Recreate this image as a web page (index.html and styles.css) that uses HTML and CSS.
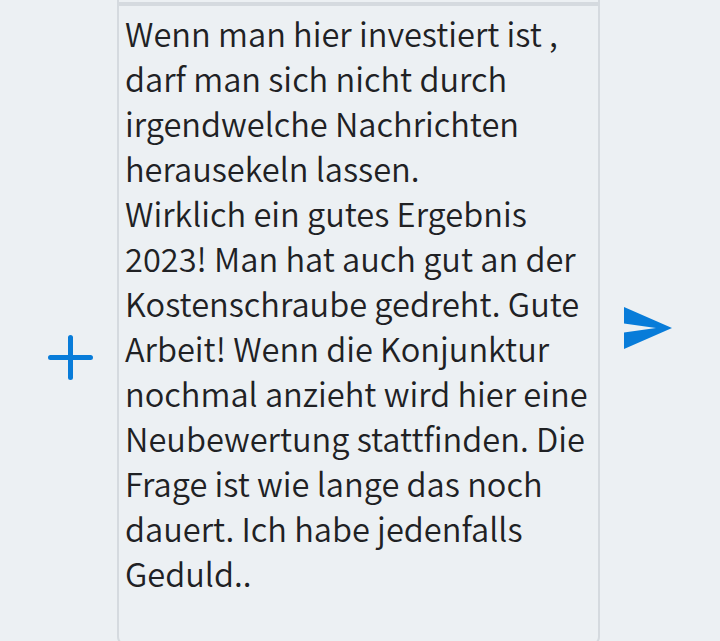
FILE: index.html
```html
<!DOCTYPE html>
<html lang="de">

    <head>
        <meta charset="UTF-8">
        <meta name="viewport" content="width=device-width, initial-scale=1.0">
        <link rel="stylesheet" href="styles.css">
        <title>Nachricht</title>
    </head>

    <body>
        <div class="composer">
            <button class="add" type="button" aria-label="Anhang">
                <svg width="46" height="46" viewBox="0 0 46 46">
                    <path d="M23.5 3.500v40M3.500 23.500h40" />
                </svg>
            </button>
            <div class="box">
                <div class="divider"></div>
                <div class="message" contenteditable="true" spellcheck="false">
                    Wenn man hier investiert ist ,<br>
                    darf man sich nicht durch<br>
                    irgendwelche Nachrichten<br>
                    herausekeln lassen.<br>
                    Wirklich ein gutes Ergebnis<br>
                    2023! Man hat auch gut an der<br>
                    Kostenschraube gedreht. Gute<br>
                    Arbeit! Wenn die Konjunktur<br>
                    nochmal anzieht wird hier eine<br>
                    Neubewertung stattfinden. Die<br>
                    Frage ist wie lange das noch<br>
                    dauert. Ich habe jedenfalls<br>
                    Geduld..
                </div>
            </div>
            <button class="send" type="button" aria-label="Senden">
                <svg width="48" height="42" viewBox="0 0 48 42">
                    <path d="M0 0L48 21L0 42V25.500L32 21L0 16.500Z" />
                </svg>
            </button>
        </div>
    </body>
</html>
```
FILE: styles.css
```css
body {
    margin: 0;
    background-color: #ecf0f3;
    overflow: hidden;
}

.composer {
    display: grid;
    grid-template-columns: 117px 483px 120px;
    height: 641px;
}

.box {
    box-sizing: border-box;
    height: 645px;
    padding-top: 2px;
    border: 2px solid #d5dadf;
    border-top: none;
    border-radius: 0 0 8px 8px;
}

.divider {
    height: 4px;
    background-color: #d5dadf;
}

.message {
    padding: 4px 0 0 6px;
    font-family: "Noto Sans CJK SC", sans-serif;
    font-size: 32.6px;
    font-weight: 350;
    line-height: 45px;
    color: #202124;
    white-space: nowrap;
    outline: none;
}

button {
    padding: 0;
    border: none;
    background: none;
    cursor: pointer;
}

svg {
    display: block;
}

.add {
    align-self: start;
    margin: 334px 0 0 47px;
}

.add path {
    fill: none;
    stroke: #087cd9;
    stroke-width: 5;
    stroke-linecap: round;
}

.send {
    align-self: start;
    margin: 307px 0 0 24px;
}

.send path {
    fill: #087cd9;
}
```
